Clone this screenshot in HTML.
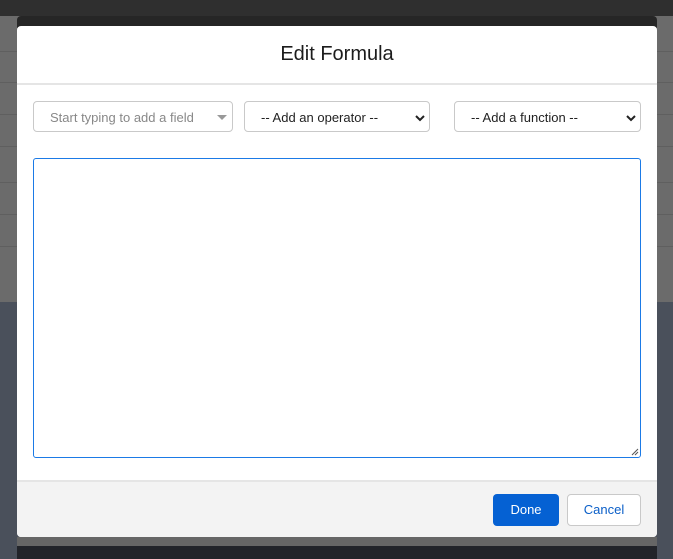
<!DOCTYPE html>
<html><head><style>
body{margin:0;width:673px;height:559px;overflow:hidden;position:relative;font-family:"Liberation Sans",sans-serif;background:#4a505b;}
.top{position:absolute;left:0;top:0;width:673px;height:302px;background:#6b6b6b;}
.dark{position:absolute;left:0;top:0;width:673px;height:16px;background:#2f2f2f;}
.ln{position:absolute;left:0;width:673px;height:1px;background:#5f5f5f;}
.strip{position:absolute;left:17px;top:16px;width:640px;height:12px;background:#262626;border-radius:4px 4px 0 0;}
.bot{position:absolute;left:17px;top:537px;width:640px;height:9px;background:#666;}
.bot2{position:absolute;left:17px;top:546px;width:640px;height:13px;background:#22242a;}
.modal{position:absolute;left:17px;top:26px;width:640px;height:511px;background:#fff;border-radius:4px;overflow:hidden;}
.hdr{height:57px;border-bottom:2px solid #e5e5e5;text-align:center;line-height:57px;font-size:20px;color:#1c1c1c;}
.ctl{position:absolute;top:75px;height:31px;border:1px solid #c9c9c9;border-radius:4px;box-sizing:border-box;font-size:13px;line-height:31px;color:#222;}
.ta{position:absolute;left:16px;top:132px;width:608px;height:300px;border:1px solid #1b7ae6;border-radius:3px;box-sizing:border-box;}
.ft{position:absolute;left:0;top:454px;width:640px;height:57px;background:#f3f3f3;border-top:2px solid #e5e5e5;}
.btn{position:absolute;top:12px;height:32px;border-radius:4px;box-sizing:border-box;font-size:13px;line-height:32px;text-align:center;}
</style></head><body>
<div class="top"></div><div class="dark"></div>
<div class="ln" style="top:51px"></div><div class="ln" style="top:82px"></div><div class="ln" style="top:114px"></div><div class="ln" style="top:146px"></div><div class="ln" style="top:182px"></div><div class="ln" style="top:214px"></div><div class="ln" style="top:246px"></div>
<div class="strip"></div>
<div class="bot"></div><div class="bot2"></div>
<div class="modal">
<div class="hdr">Edit Formula</div>
<div class="ctl" style="left:16px;width:200px;color:#888;padding-left:16px;">Start typing to add a field<span style="position:absolute;right:5px;top:13px;width:0;height:0;border-left:5px solid transparent;border-right:5px solid transparent;border-top:5px solid #999;"></span></div>
<div class="ctl" style="left:227px;width:186px;padding-left:16px;">-- Add an operator --<svg style="position:absolute;right:4px;top:12px" width="10" height="8" viewBox="0 0 10 8"><path d="M1 2l4 4 4-4" stroke="#222" stroke-width="2" fill="none"/></svg></div>
<div class="ctl" style="left:437px;width:187px;padding-left:16px;">-- Add a function --<svg style="position:absolute;right:4px;top:12px" width="10" height="8" viewBox="0 0 10 8"><path d="M1 2l4 4 4-4" stroke="#222" stroke-width="2" fill="none"/></svg></div>
<div class="ta"><svg style="position:absolute;right:1px;bottom:1px" width="8" height="8"><path d="M7 1L1 7M7 4L4 7" stroke="#555" stroke-width="1"/></svg></div>
<div class="ft">
<div class="btn" style="left:476px;width:66px;background:#0561d3;color:#fff;">Done</div>
<div class="btn" style="left:550px;width:74px;background:#fff;border:1px solid #c9c9c9;color:#0b5fc8;line-height:30px;">Cancel</div>
</div>
</div>
</body></html>
